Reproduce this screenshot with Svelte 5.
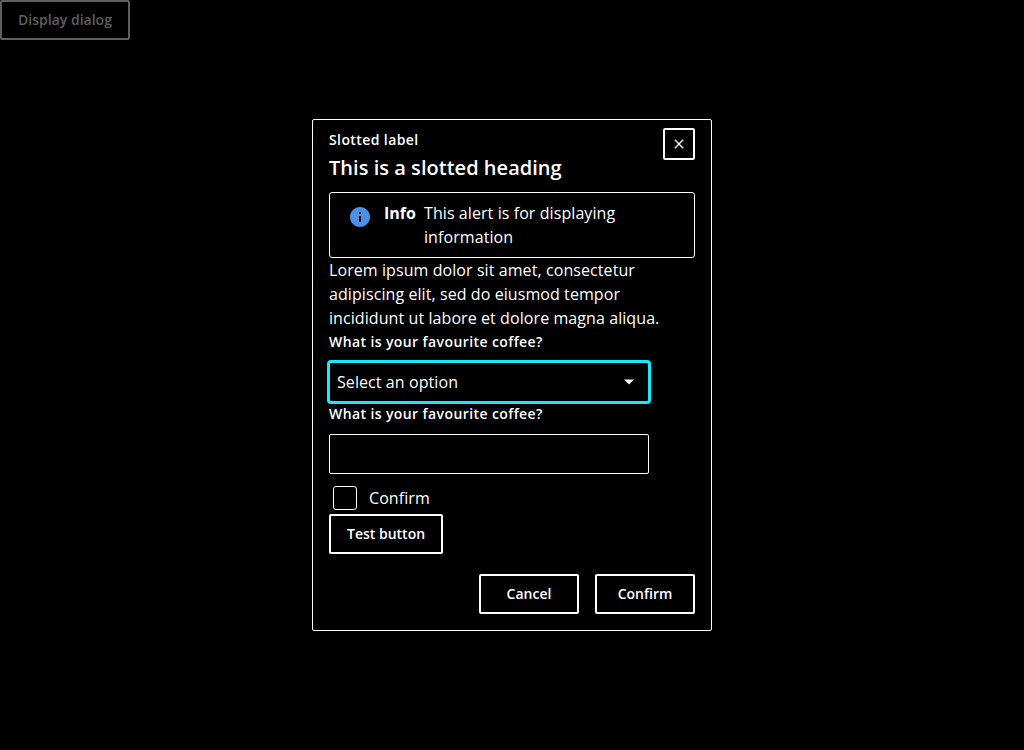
<script>
  let confirmed = $state(false);
  let answer = $state('');
</script>

<div class="page">
  <button class="btn muted">Display dialog</button>

  <div class="dialog" role="dialog" aria-labelledby="dialog-heading">
    <header>
      <div class="titles">
        <div class="label">Slotted label</div>
        <h1 id="dialog-heading">This is a slotted heading</h1>
      </div>
      <button class="close" aria-label="Close">
        <svg width="16" height="16" viewBox="0 0 24 24" fill="#fff">
          <path d="M19 6.41L17.59 5 12 10.59 6.41 5 5 6.41 10.59 12 5 17.59 6.41 19 12 13.41 17.59 19 19 17.59 13.41 12z" />
        </svg>
      </button>
    </header>

    <div class="alert">
      <svg class="info" width="24" height="24" viewBox="0 0 24 24" fill="#4a90e8">
        <path d="M12 2C6.48 2 2 6.48 2 12s4.48 10 10 10 10-4.48 10-10S17.52 2 12 2zm1 15h-2v-6h2v6zm0-8h-2V7h2v2z" />
      </svg>
      <strong>Info</strong>
      <span>This alert is for displaying information</span>
    </div>

    <p>Lorem ipsum dolor sit amet, consectetur adipiscing elit, sed do eiusmod tempor incididunt ut labore et dolore magna aliqua.</p>

    <div class="label">What is your favourite coffee?</div>
    <button class="select">
      <span>Select an option</span>
      <svg width="24" height="24" viewBox="0 0 24 24" fill="#fff"><path d="M7 9.5l5 5 5-5z" /></svg>
    </button>

    <label class="label" for="coffee">What is your favourite coffee?</label>
    <input id="coffee" class="field" type="text" bind:value={answer} />

    <label class="check">
      <input type="checkbox" bind:checked={confirmed} />
      <span>Confirm</span>
    </label>

    <button class="btn test">Test button</button>

    <footer>
      <button class="btn">Cancel</button>
      <button class="btn">Confirm</button>
    </footer>
  </div>
</div>

<style>
  :global(body) {
    background: #000;
  }
  .page {
    height: 750px;
    display: flex;
    flex-direction: column;
    align-items: flex-start;
    background: #000;
    color: #fff;
    font: 400 16px/24px 'Open Sans', sans-serif;
    letter-spacing: 0.08px;
    overflow: hidden;
  }
  .page * {
    box-sizing: border-box;
  }
  button {
    font-family: inherit;
    color: #fff;
    background: #000;
    margin: 0;
  }
  .btn {
    height: 40px;
    min-width: 100px;
    padding: 0 16px;
    border: 2px solid #fff;
    border-radius: 2px;
    font-size: 14px;
    font-weight: 600;
    line-height: 24px;
    white-space: nowrap;
  }
  .muted {
    width: 130px;
    color: #5e5e5e;
    border-color: #5e5e5e;
  }
  .dialog {
    width: 400px;
    height: 512px;
    margin: 79px auto 0;
    padding: 8px 16px 16px;
    border: 1px solid #fff;
    border-radius: 2px;
    display: flex;
    flex-direction: column;
    align-items: stretch;
  }
  header {
    display: flex;
    justify-content: space-between;
    align-items: flex-start;
    margin-bottom: 8px;
  }
  .label {
    font-size: 14px;
    font-weight: 600;
    line-height: 24px;
    letter-spacing: 0.4px;
  }
  h1 {
    margin: 0;
    font-size: 20px;
    font-weight: 600;
    line-height: 32px;
    letter-spacing: 0.03px;
  }
  .close {
    width: 32px;
    height: 32px;
    padding: 0;
    border: 2px solid #fff;
    border-radius: 2px;
    display: flex;
    align-items: center;
    justify-content: center;
  }
  .alert {
    display: flex;
    align-items: flex-start;
    height: 66px;
    padding: 8px 18px;
    border: 1px solid #fff;
    border-radius: 3px;
  }
  .info {
    flex: none;
    margin: 4px 12px 0 0;
  }
  .alert strong {
    flex: none;
    width: 32px;
    margin-right: 8px;
    font-weight: 700;
    letter-spacing: 0;
  }
  p {
    margin: 0;
  }
  .select {
    width: 320px;
    height: 40px;
    margin: 8px 0 0;
    padding: 0 7px;
    border: 1px solid #000;
    border-radius: 2px;
    outline: 3px solid #17e8ff;
    outline-offset: -1px;
    display: flex;
    align-items: center;
    justify-content: space-between;
    font-size: 16px;
    line-height: 24px;
    letter-spacing: 0.08px;
  }
  .field {
    width: 320px;
    height: 40px;
    margin: 8px 0 12px;
    padding: 0 7px;
    border: 1px solid #fff;
    border-radius: 2px;
    background: #000;
    color: #fff;
    font: inherit;
  }
  .check {
    display: flex;
    gap: 12px;
    height: 24px;
    margin: 0 0 4px 4px;
  }
  .check input {
    appearance: none;
    width: 24px;
    height: 24px;
    margin: 0;
    border: 1px solid #fff;
    border-radius: 3px;
  }
  .test {
    width: 114px;
  }
  footer {
    display: flex;
    justify-content: flex-end;
    gap: 16px;
    margin-top: 20px;
  }
</style>
